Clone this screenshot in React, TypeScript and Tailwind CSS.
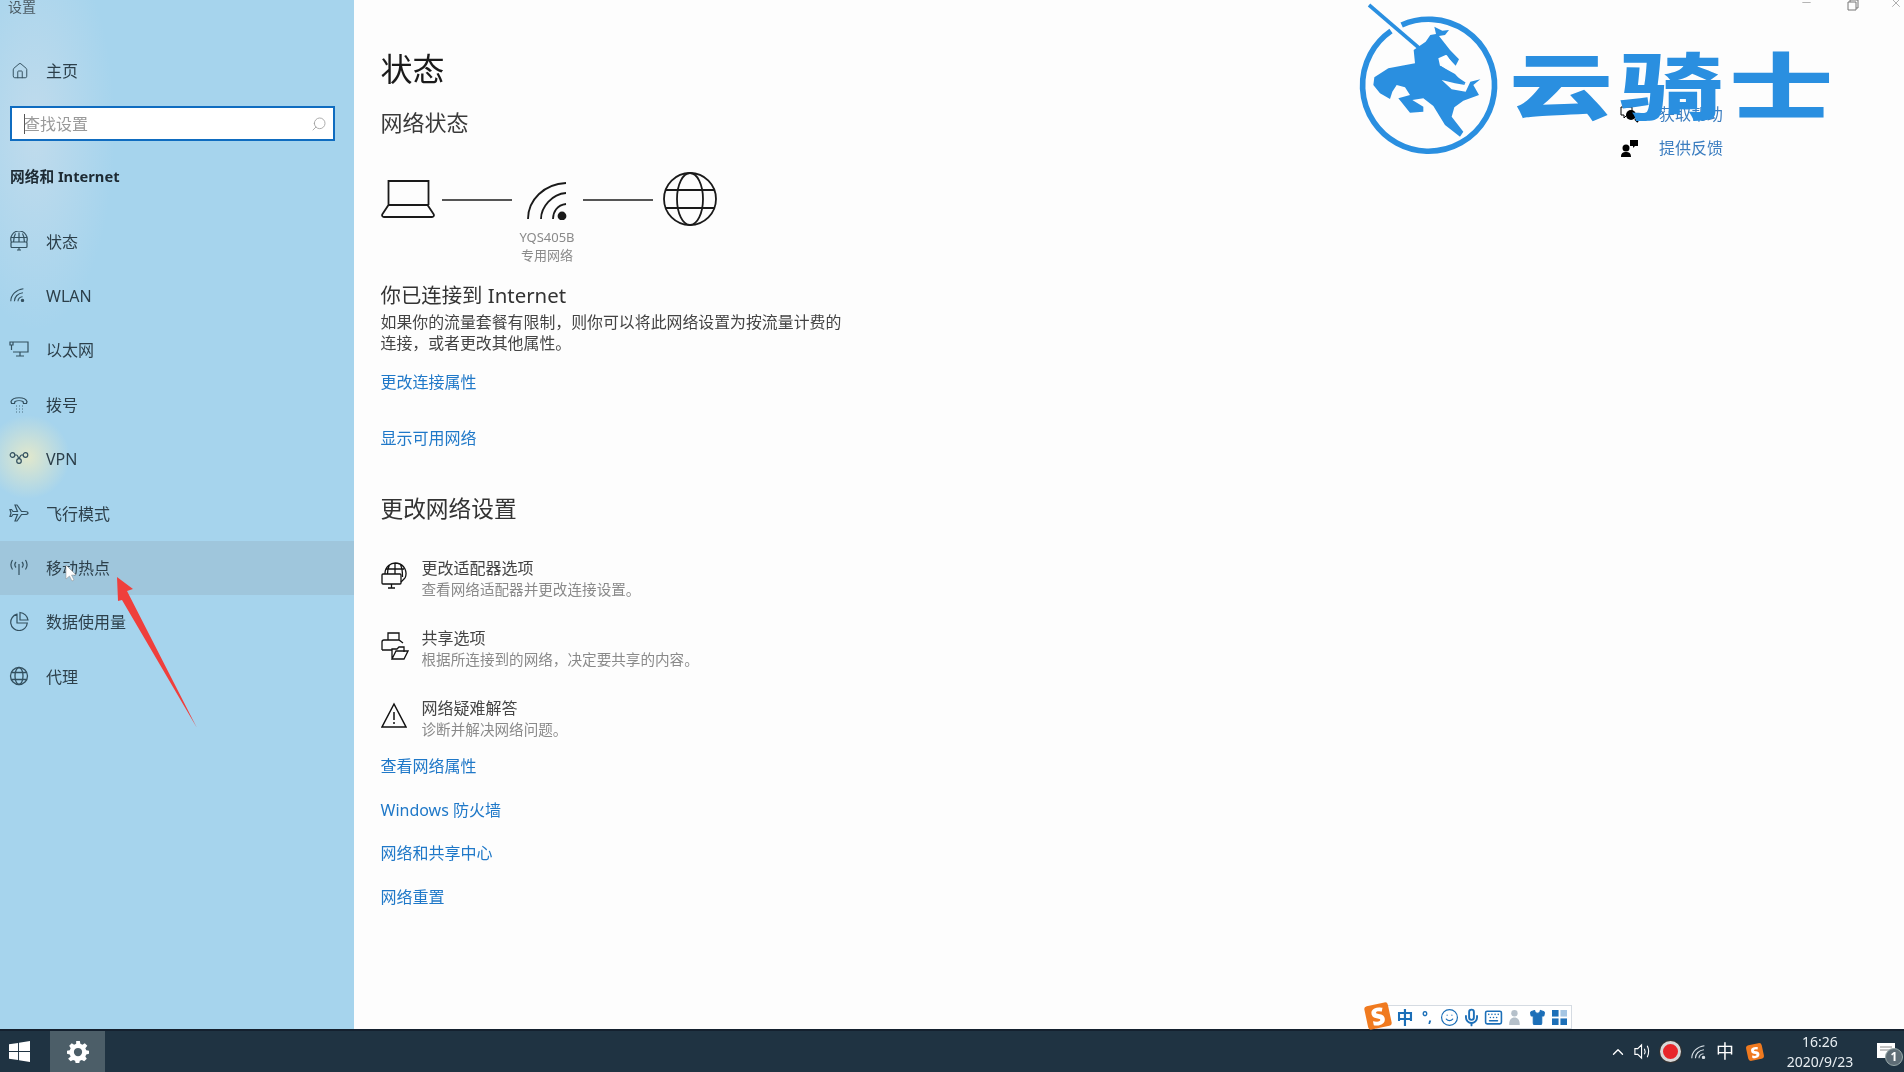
import React from "react";
import { Search, House, Minus, X, ChevronUp, Shirt, Mic, Keyboard, Smile } from "lucide-react";

const S = "fill-none stroke-current";

function StatusIcon() {
  return (
    <svg viewBox="0 0 20 20" className={`w-[20px] h-[20px] ${S}`} strokeWidth="1.2">
      <path d="M2.300 11a8.200 8.200 0 1 1 15.400 0M10 1.500V11M6.500 2.500C5 5 4.600 7.500 4.600 11M13.500 2.500C15 5 15.400 7.500 15.400 11M2.500 6.500h15" />
      <rect x="2" y="11" width="16" height="5.500" rx="1" />
      <path d="M8 19h4M10 16.500V19" />
    </svg>
  );
}
function WifiIcon() {
  return (
    <svg viewBox="0 0 20 20" className={`w-[18px] h-[18px] ${S}`} strokeWidth="1.2">
      <path d="M2 17C2 10 8 4 16 3M6 17c0-5 4-9 9.500-9.500M10 17c0-2.500 2-5 5-5" />
      <circle cx="15" cy="16" r="1.300" className="fill-current" />
    </svg>
  );
}
function MonitorIcon() {
  return (
    <svg viewBox="0 0 20 20" className={`w-[20px] h-[20px] ${S}`} strokeWidth="1.2">
      <path d="M4 3h15v10H4M11 13v4M7 17h8M1 3h3v3H1zM2.500 6v5" />
    </svg>
  );
}
function DialIcon() {
  return (
    <svg viewBox="0 0 20 20" className={`w-[20px] h-[20px] ${S}`} strokeWidth="1.2">
      <path d="M2 7.500C4 2.500 16 2.500 18 7.500l-.5 2h-3L14 7.500c-2-1-6-1-8 0l-.5 2h-3z" />
      <path d="M7 12h.8M10 12h.8M13 12h.8M7 15h.8M10 15h.8M13 15h.8M7 18h.8M10 18h.8M13 18h.8" />
    </svg>
  );
}
function VpnIcon() {
  return (
    <svg viewBox="0 0 20 20" className={`w-[20px] h-[20px] ${S}`} strokeWidth="1.2">
      <circle cx="3.500" cy="7" r="2.300" />
      <circle cx="16.500" cy="7" r="2.300" />
      <circle cx="10" cy="13" r="2.300" />
      <path d="M5.800 7h1.700c1.500 0 1.500 3 2.500 3.500M14.200 7h-1.700c-1 0-1.500 2-2.500 3.500" />
    </svg>
  );
}
function PlaneIcon() {
  return (
    <svg viewBox="0 0 20 20" className={`w-[20px] h-[20px] ${S}`} strokeWidth="1.2">
      <path d="M19 10c0-1-1.500-1.500-3-1.500h-3.500L8 2H6l2.500 6.500H4L2.500 6.500H1l1 3.500-1 3.500h1.500L4 11.500h4.500L6 18h2l4.500-6.500H16c1.500 0 3-.5 3-1.500z" />
    </svg>
  );
}
function HotspotIcon() {
  return (
    <svg viewBox="0 0 20 20" className={`w-[20px] h-[20px] ${S}`} strokeWidth="1.200">
      <path d="M10 7v11M7 5c-1.300 1.500-1.300 4 0 5.500M13 5c1.300 1.500 1.300 4 0 5.500M3.500 3c-2 3-2 6.500 0 9.500M16.500 3c2 3 2 6.500 0 9.500" />
    </svg>
  );
}
function PieIcon() {
  return (
    <svg viewBox="0 0 20 20" className={`w-[20px] h-[20px] ${S}`} strokeWidth="1.200">
      <path d="M8 3.200A8.300 8.300 0 1 0 18.300 12H8z" />
      <path d="M11 1.500c4 .3 7.500 3.500 8 7.500h-8z" />
    </svg>
  );
}
function GlobeSm() {
  return (
    <svg viewBox="0 0 20 20" className={`w-[20px] h-[20px] ${S}`} strokeWidth="1.300">
      <circle cx="10" cy="10" r="8.500" />
      <ellipse cx="10" cy="10" rx="4" ry="8.500" />
      <path d="M2.500 6.500h15M2.500 13.500h15" />
    </svg>
  );
}

const nav: [string, React.ReactNode, boolean?][] = [
  ["状态", <StatusIcon />],
  ["WLAN", <WifiIcon />],
  ["以太网", <MonitorIcon />],
  ["拨号", <DialIcon />],
  ["VPN", <VpnIcon />],
  ["飞行模式", <PlaneIcon />],
  ["移动热点", <HotspotIcon />, true],
  ["数据使用量", <PieIcon />],
  ["代理", <GlobeSm />],
];

function NavRow({ label, icon, active }: { label: string; icon: React.ReactNode; active?: boolean }) {
  return (
    <div className={`h-[54.4px] flex items-center pl-[9px] ${active ? "bg-[#9fc6dc]" : ""}`}>
      <span className="w-[37px] flex text-[#33505f] -mt-[2px]">{icon}</span>
      <span className="text-[16px] text-[#2c3f4a]">{label}</span>
    </div>
  );
}

function Link({ children }: { children: React.ReactNode }) {
  return <div className="h-[24px] leading-[24px] text-[16px] text-[#1f78c8]">{children}</div>;
}

function SettingItem({ icon, title, sub, className }: { icon: React.ReactNode; title: string; sub: string; className?: string }) {
  return (
    <div className={`flex ${className ?? ""}`}>
      <div className="w-[41px] pt-[4px] text-[#111]">{icon}</div>
      <div>
        <div className="h-[21px] leading-[21px] text-[16px] text-[#444]">{title}</div>
        <div className="h-[21px] leading-[21px] text-[14.6px] text-[#8a8a8a]">{sub}</div>
      </div>
    </div>
  );
}

function Knight() {
  return (
    <svg viewBox="0 0 450 480" className="absolute left-[1355px] top-0 w-[150px] h-[160px] text-[#2a8fe0]">
      <path d="M140 75A198 198 0 1 1 108 93" fill="none" stroke="currentColor" strokeWidth="17" />
      <path d="M42 15L205 155" stroke="currentColor" strokeWidth="11" />
      <path
        d="M58 232L100 205L180 190L176 150L212 125L226 105L243 102L238 80L262 92L282 90L270 105L252 108L285 150L312 178L302 197L272 165L250 175L255 197L300 222L330 255L300 250L260 240L290 268L332 275L346 245L376 238L355 255L372 285L325 302L298 322L290 350L325 395L315 410L270 375L235 318L205 295L172 300L205 320L205 335L165 338L130 295L165 285L150 262L125 255L112 275L105 297L75 280L55 255z"
        fill="currentColor"
      />
      <path d="M255 175L275 165L292 190L270 198z" fill="#fff" />
      <path d="M255 200L330 250" stroke="currentColor" strokeWidth="6" />
    </svg>
  );
}

function SogouS({ big }: { big?: boolean }) {
  return (
    <span
      className={`inline-flex items-center justify-center bg-[#f07a1f] text-white font-black rounded-[3px] -rotate-12 ${
        big ? "w-[24px] h-[24px] text-[24px]" : "w-[16px] h-[16px] text-[15px]"
      } leading-none`}
    >
      S
    </span>
  );
}

export default function App() {
  return (
    <div className="relative w-[1904px] h-[1072px] overflow-hidden flex flex-col bg-[#fdfdfd] font-['Noto_Sans','Noto_Sans_CJK_SC',sans-serif] blur-[0.5px]">
      <div className="flex flex-1 min-h-0">
        {/* sidebar */}
        <aside className="w-[354px] shrink-0 bg-[#a6d4ed] bg-[radial-gradient(circle_at_28px_457px,rgba(250,240,190,0.7),transparent_42px),radial-gradient(ellipse_80px_200px_at_35px_130px,rgba(195,220,236,0.9),transparent)]">
          <div className="h-[14px] leading-[14px] pl-[8px] text-[14px] text-[#4b5a63]">设置</div>
          <div className="mt-[43px] h-[28px] flex items-center pl-[11px] text-[#33505f]">
            <House className="w-[18px] h-[18px] mr-[17px]" strokeWidth={1.3} />
            <span className="text-[16px] text-[#2c3f4a]">主页</span>
          </div>
          <div className="mt-[21px] ml-[10px] w-[325px] h-[35px] bg-white border-2 border-[#0f6cc0] flex items-center pl-[12px] pr-[6px]">
            <span className="w-px h-[20px] bg-[#555] -mr-px" />
            <span className="flex-1 text-[16px] text-[#9a9a9a]">查找设置</span>
            <Search className="w-[16px] h-[16px] text-[#a0a0a0] -scale-x-100" strokeWidth={1.3} />
          </div>
          <div className="mt-[21px] h-[28px] leading-[28px] pl-[10px] text-[14.7px] font-bold text-[#1d2a33]">网络和 Internet</div>
          <div className="mt-[24.5px]">
            {nav.map(([l, i, a]) => (
              <NavRow key={l} label={l} icon={i} active={a} />
            ))}
          </div>
        </aside>

        {/* main */}
        <main className="flex-1 flex pl-[26.5px]">
          <div className="flex-1">
            <div className="mt-[49px] h-[40px] leading-[40px] text-[32px] text-[#1a1a1a]">状态</div>
            <div className="mt-[18px] h-[30px] leading-[30px] text-[22px] text-[#3a3a3a]">网络状态</div>
            <div className="mt-[35px] flex items-start text-[#1a1a1a]">
              <svg viewBox="0 0 54 38" className={`mt-[8px] w-[54px] h-[38px] ${S}`} strokeWidth="1.800">
                <path d="M7.500 25V1h40v24M7.500 25h39l6 9c1 1.500 0 3-1.500 3H3c-1.500 0-2.500-1.500-1.500-3z" />
              </svg>
              <div className="mt-[27px] ml-[7px] w-[70px] h-[2px] bg-[#555]" />
              <div className="w-[71px] flex flex-col items-center">
                <svg viewBox="0 0 40 38" className={`mt-[10px] w-[40px] h-[38px] ${S}`} strokeWidth="1.800">
                  <path d="M1 37C1 18 17 2 39 1M14 37C14 25 25 12 39 11M26 37C26 30 30 23 39 22" />
                  <circle cx="35" cy="34" r="3.500" fill="currentColor" />
                </svg>
                <div className="mt-[8px] h-[18px] leading-[18px] text-[13px] text-[#8a8a8a]">YQS405B</div>
                <div className="h-[18px] leading-[18px] text-[13px] text-[#8a8a8a]">专用网络</div>
              </div>
              <div className="mt-[27px] w-[70px] h-[2px] bg-[#555]" />
              <svg viewBox="0 0 54 54" className={`ml-[10px] w-[54px] h-[54px] ${S}`} strokeWidth="1.800">
                <circle cx="27" cy="27" r="26" />
                <ellipse cx="27" cy="27" rx="13" ry="26" />
                <path d="M3 18h48M3 36h48" />
              </svg>
            </div>
            <div className="mt-[17px] h-[28px] leading-[28px] text-[20.4px] text-[#333]">你已连接到 Internet</div>
            <div className="mt-[3px] text-[15.9px] leading-[21px] text-[#444] w-[480px]">
              如果你的流量套餐有限制，则你可以将此网络设置为按流量计费的
              <br />
              连接，或者更改其他属性。
            </div>
            <div className="mt-[16px]"><Link>更改连接属性</Link></div>
            <div className="mt-[32px]"><Link>显示可用网络</Link></div>
            <div className="mt-[43px] h-[32px] leading-[32px] text-[22.7px] text-[#333]">更改网络设置</div>
            <SettingItem
              className="mt-[33px]"
              title="更改适配器选项"
              sub="查看网络适配器并更改连接设置。"
              icon={
                <svg viewBox="0 0 26 28" className={`w-[26px] h-[28px] ${S}`} strokeWidth="1.300">
                  <path d="M4 12a10.500 10.500 0 1 1 20 4M14 1.500V12M8.500 3C7 5.500 6.500 8.500 6.500 12M19.500 3C21 5.500 21.500 9 21.500 15M5 7h18" />
                  <rect x="1" y="12" width="19" height="10" rx="1" />
                  <path d="M7 26h7M10.500 22v4M20 20l4-4" />
                </svg>
              }
            />
            <SettingItem
              className="mt-[28px]"
              title="共享选项"
              sub="根据所连接到的网络，决定要共享的内容。"
              icon={
                <svg viewBox="0 0 28 28" className={`w-[28px] h-[28px] ${S}`} strokeWidth="1.300">
                  <path d="M7 8V1h11v7M1 18V10c0-1 1-2 2-2h15l4 3M1 18h10M7 8h11" />
                  <path d="M11 27V17h5l2-2h5v5M11 27h12l4-8H15l-4 8z" />
                </svg>
              }
            />
            <SettingItem
              className="mt-[28px]"
              title="网络疑难解答"
              sub="诊断并解决网络问题。"
              icon={
                <svg viewBox="0 0 26 26" className={`w-[26px] h-[26px] ${S}`} strokeWidth="1.500">
                  <path d="M13 2L25 25H1z" />
                  <path d="M13 10v8M13 20v2" />
                </svg>
              }
            />
            <div className="mt-[14px] flex flex-col gap-[19.5px]">
              <Link>查看网络属性</Link>
              <Link>Windows 防火墙</Link>
              <Link>网络和共享中心</Link>
              <Link>网络重置</Link>
            </div>
          </div>
          <div className="w-[284px] pt-[97px]">
            <div className="h-[34px] flex items-center">
              <svg viewBox="0 0 20 20" className="w-[20px] h-[20px] mr-[19px] text-black">
                <path d="M1 3h11v8H7l-3 3v-3H1z" fill="none" stroke="currentColor" />
                <circle cx="11" cy="11" r="5" fill="currentColor" />
                <path d="M15 15l3 3" stroke="currentColor" strokeWidth="2" />
              </svg>
              <span className="text-[16px] text-[#3c7ec0]">获取帮助</span>
            </div>
            <div className="h-[34px] flex items-center">
              <svg viewBox="0 0 20 20" className="w-[20px] h-[20px] mr-[19px] text-black" fill="currentColor">
                <circle cx="6" cy="10" r="3.500" />
                <path d="M1 19c0-4 2-5 5-5s5 1 5 5zM10 2h8v6h-3l-2 2V8h-3z" />
              </svg>
              <span className="text-[16px] text-[#3c7ec0]">提供反馈</span>
            </div>
          </div>
        </main>
      </div>

      {/* taskbar */}
      <footer className="h-[43px] shrink-0 flex items-center bg-[#1f3342] border-t-2 border-[#14202e] text-white">
        <div className="w-[50px] flex justify-start pl-[9px]">
          <svg viewBox="0 0 22 22" className="w-[21px] h-[21px]" fill="#fff">
            <path d="M0 3.500l9.500-1.500v8.500H0zM10.500 1.800L22 0v10.500H10.500zM0 11.500h9.500V20L0 18.500zM10.500 11.500H22V22l-11.500-1.800z" />
          </svg>
        </div>
        <div className="w-[55px] h-full flex items-center justify-center bg-[#4c5e68]">
          <svg viewBox="0 0 24 24" className="w-[22px] h-[22px]">
            <path
              d="M10 1h4l.6 3 2.200 1 2.600-1.600 2.800 2.800L20 8.800l1 2.200 3 .6v3.400l-3 .6-1 2.200 1.600 2.600-2.800 2.800-2.600-1.600-2.200 1-.6 2.400h-4l-.6-2.400-2.200-1-2.600 1.600-2.800-2.800L4 17.800 3 15.600l-3-.6v-3.400l3-.6 1-2.200-1.600-2.600 2.800-2.800L7.800 5l2.200-1z"
              fill="#fff"
              transform="translate(0 -1)"
            />
            <circle cx="12" cy="12" r="4.500" fill="#4c5e68" />
          </svg>
        </div>
        <div className="ml-auto flex items-center h-full">
          <div className="w-[25px] flex justify-center"><ChevronUp className="w-[18px] h-[18px]" strokeWidth={1.800} /></div>
          <div className="w-[25px] flex justify-center">
            <svg viewBox="0 0 20 20" className="w-[19px] h-[19px] fill-none stroke-white" strokeWidth="1.200">
              <path d="M2 7h3l4-4v14l-4-4H2zM12 7c1 2 1 4 0 6M15 4c2 4 2 8 0 12" />
            </svg>
          </div>
          <div className="w-[30px] flex justify-center">
            <span className="w-[21px] h-[21px] rounded-full border-[3px] border-[#d8d8d8] bg-[#e8262a] ring-1 ring-[#333]" />
          </div>
          <div className="w-[27px] flex justify-center text-[#d8e0e6]"><WifiIcon /></div>
          <div className="w-[26px] text-center text-[18px]">中</div>
          <div className="w-[34px] flex justify-center"><SogouS /></div>
          <div className="w-[96px] text-center text-[14px] leading-[20px] text-[#e8eef2]">
            <div>16:26</div>
            <div>2020/9/23</div>
          </div>
          <div className="relative w-[36px] flex justify-center">
            <svg viewBox="0 0 20 20" className="w-[20px] h-[20px] fill-white">
              <path d="M1 1h18v15h-18z" />
              <path d="M4 5h12M4 8h12" stroke="#888" />
            </svg>
            <span className="absolute right-[1px] top-[6px] w-[18px] h-[18px] rounded-full bg-[#5e6d76] border border-[#9aa] text-[12px] leading-[15px] text-center font-bold">1</span>
          </div>
        </div>
      </footer>

      {/* window buttons */}
      <div className="absolute left-[1800px] top-0 text-[#777]">
        <Minus className="absolute left-0 -top-[4px] w-[13px] h-[13px]" strokeWidth={1} />
        <svg viewBox="0 0 12 12" className="absolute left-[47px] -top-[1px] w-[12px] h-[12px] fill-none stroke-current">
          <path d="M1 3h8v8H1zM3 3V1h8v8H9" />
        </svg>
        <X className="absolute left-[89px] -top-[4px] w-[14px] h-[14px]" strokeWidth={1} />
      </div>

      {/* logo watermark */}
      <Knight />
      <div className="absolute left-[1509px] top-[37px] w-[324px] h-[90px] flex justify-between text-[#2a8fe0] text-[72px] leading-[90px] font-black font-['Noto_Sans_CJK_SC',sans-serif] [&>span]:inline-block [&>span]:scale-x-[1.44] [&>span]:w-[104px] [&>span]:text-center">
        <span>云</span>
        <span>骑</span>
        <span>士</span>
      </div>

      {/* IME bar */}
      <div className="absolute left-[1376px] top-[1005px] w-[196px] h-[24px] bg-white border border-[#d5dbe2] flex items-center pl-[17px] text-[#1c6fb8]">
        <span className="w-[22px] text-[17px] font-bold text-center leading-none">中</span>
        <span className="w-[22px] text-[14px] text-center font-bold leading-none">°,</span>
        <span className="w-[22px] flex justify-center"><Smile className="w-[19px] h-[19px]" strokeWidth={1.500} /></span>
        <span className="w-[22px] flex justify-center"><Mic className="w-[19px] h-[19px]" strokeWidth={2.400} /></span>
        <span className="w-[22px] flex justify-center"><Keyboard className="w-[19px] h-[19px]" strokeWidth={2} /></span>
        <span className="w-[22px] flex justify-center">
          <svg viewBox="0 0 16 16" className="w-[17px] h-[17px] fill-[#b5c0ca]">
            <circle cx="7" cy="4" r="3" />
            <path d="M2 15c0-5 2-7 5-7s5 2 5 7z" />
          </svg>
        </span>
        <span className="w-[22px] flex justify-center"><Shirt className="w-[17px] h-[17px] fill-current" strokeWidth={1.500} /></span>
        <span className="w-[22px] flex justify-center">
          <svg viewBox="0 0 16 16" className="w-[15px] h-[15px] fill-current">
            <rect x="0" y="0" width="7" height="7" />
            <rect x="9" y="0" width="7" height="7" opacity=".4" />
            <rect x="0" y="9" width="7" height="7" />
            <rect x="9" y="9" width="7" height="7" />
          </svg>
        </span>
      </div>
      <div className="absolute left-[1366px] top-[1004px]"><SogouS big /></div>

      {/* red arrow + cursor */}
      <svg viewBox="0 0 100 160" className="absolute left-[110px] top-[572px] w-[100px] h-[160px]">
        <polygon points="7,5 23,17 17,19 87,156 12,28 8,29" fill="#ef3f3c" />
      </svg>
      <svg viewBox="0 0 12 18" className="absolute left-[65px] top-[564px] w-[12px] h-[18px]">
        <path d="M1 1v14l3.500-3 2.500 5 2-1-2.500-5h4.500z" fill="#fff" stroke="#888" strokeWidth=".5" />
      </svg>
    </div>
  );
}
